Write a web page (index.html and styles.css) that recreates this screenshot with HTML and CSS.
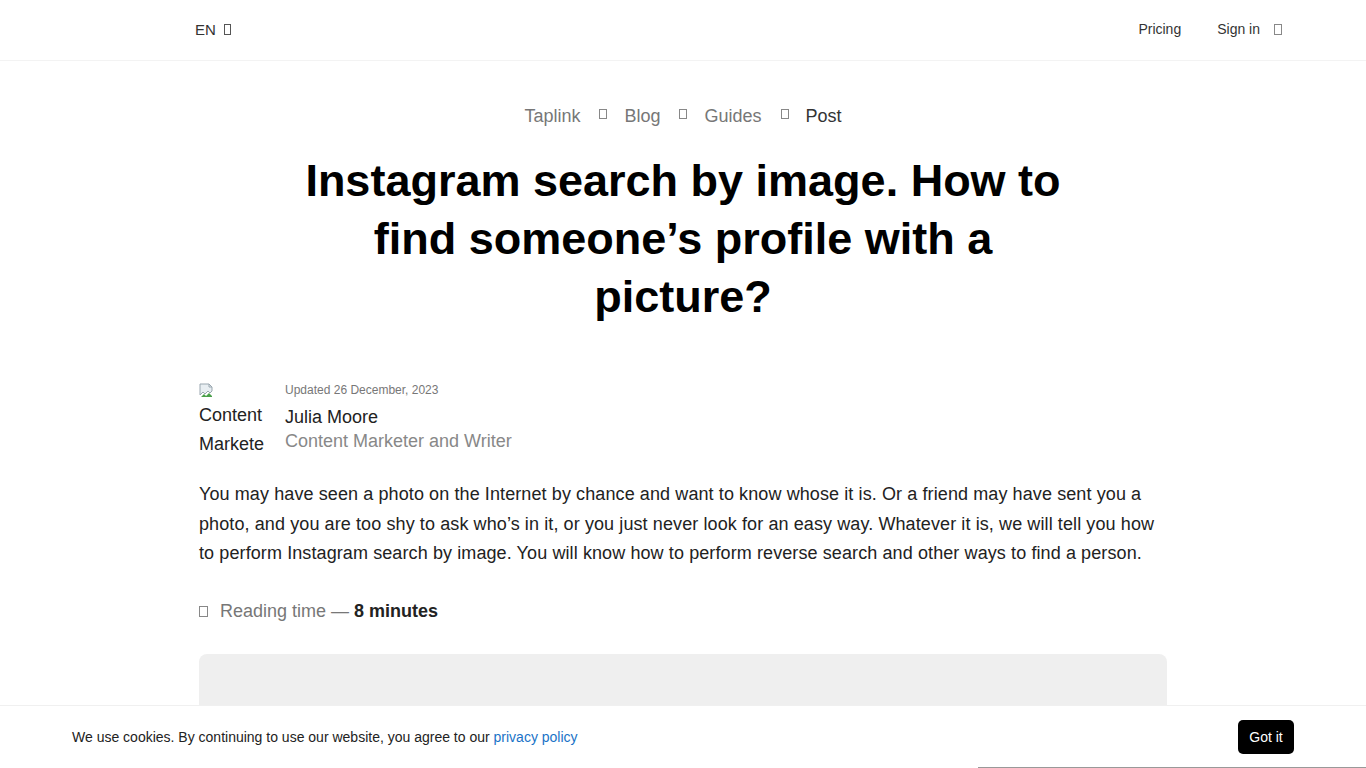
FILE: index.html
```html
<!DOCTYPE html>
<html lang="en">
<head>
<meta charset="utf-8">
<title>Instagram search by image</title>
<link rel="stylesheet" href="styles.css">
</head>
<body>
<header class="header">
  <div class="lang">EN <span class="tofu"></span></div>
  <nav class="nav">
    <a class="nav-link" href="#">Pricing</a>
    <a class="nav-link" href="#">Sign in <span class="tofu tofu-gap"></span></a>
  </nav>
</header>
<main class="main">
  <div class="crumbs">
    <a href="#" class="crumb">Taplink</a><span class="tofu crumb-sep"></span>
    <a href="#" class="crumb">Blog</a><span class="tofu crumb-sep"></span>
    <a href="#" class="crumb">Guides</a><span class="tofu crumb-sep"></span>
    <span class="crumb crumb-current">Post</span>
  </div>
  <h1 class="title">Instagram search by image. How to find someone’s profile with a picture?</h1>
  <div class="author">
    <div class="avatar">
      <svg class="broken" width="16" height="16" viewBox="0 0 16 16">
        <path d="M1 1h9l3 3v4l-2 2-2-2-3 3-2-2-3 3z" fill="#e8eef2" stroke="#9aa7b0" stroke-width="1"/>
        <path d="M2 14l3-3 2 2 3-3 3 3v1H2z" fill="#4aa04a"/>
        <path d="M10 1v3h3" fill="none" stroke="#9aa7b0"/>
      </svg>
      <div class="avatar-alt">Content Marketer and Writer</div>
    </div>
    <div class="author-info">
      <div class="updated">Updated 26 December, 2023</div>
      <div class="author-name">Julia Moore</div>
      <div class="author-role">Content Marketer and Writer</div>
    </div>
  </div>
  <p class="lead">You may have seen a photo on the Internet by chance and want to know whose it is. Or a friend may have sent you a photo, and you are too shy to ask who’s in it, or you just never look for an easy way. Whatever it is, we will tell you how to perform Instagram search by image. You will know how to perform reverse search and other ways to find a person.</p>
  <div class="reading"><span class="tofu reading-icon"></span>Reading time — <b class="reading-strong">8 minutes</b></div>
  <div class="cover"></div>
</main>
<div class="cookie">
  <div class="cookie-text">We use cookies. By continuing to use our website, you agree to our <a href="#" class="cookie-link">privacy policy</a></div>
  <button class="cookie-btn">Got it</button>
  <div class="cookie-line"></div>
</div>
</body>
</html>
```
FILE: styles.css
```css
* { box-sizing: border-box; }
html, body { margin: 0; padding: 0; }
body {
  font-family: "Liberation Sans", Arial, sans-serif;
  color: #222;
  background: #fff;
  height: 768px;
  overflow: hidden;
}
a { text-decoration: none; color: inherit; }

.tofu {
  display: inline-block;
  width: 7px;
  height: 11px;
  border: 1px solid #777;
  vertical-align: -1px;
}

.header {
  height: 61px;
  border-bottom: 1px solid #f3f3f3;
  display: flex;
  align-items: center;
  justify-content: space-between;
  padding: 0 84px 2px 195px;
}
.lang { font-size: 15px; color: #333; display: flex; align-items: center; gap: 8px; }
.lang .tofu { border-color: #555; }
.nav { display: flex; gap: 36px; align-items: center; }
.nav-link { font-size: 14px; color: #333; display: flex; align-items: center; }
.tofu-gap { margin-left: 14px; border-color: #888; width: 8px; }

.main {
  width: 968px;
  margin: 0 auto;
}
.crumbs {
  text-align: center;
  font-size: 18px;
  color: #777;
  padding-top: 44px;
  line-height: 22px;
}
.crumb { color: #777; }
.crumb-current { color: #333; }
.crumb-sep { margin: 0 12px 0 19px; width: 8px; height: 10px; border-color: #888; vertical-align: 3px; }

.title {
  font-size: 45px;
  font-weight: bold;
  color: #000;
  text-align: center;
  line-height: 58px;
  max-width: 790px;
  margin: 25px auto 0;
}

.author {
  display: flex;
  gap: 21px;
  margin-top: 54px;
}
.avatar {
  width: 65px;
  height: 70px;
  overflow: hidden;
  font-size: 18px;
  color: #222;
  padding-top: 3px;
}
.broken { display: block; }
.avatar-alt { line-height: 29px; width: 100px; margin-top: 2px; }
.author-info { display: flex; flex-direction: column; }
.updated { font-size: 12px; color: #777; line-height: 14px; margin-top: 3px; }
.author-name { font-size: 18px; color: #222; line-height: 24px; margin-top: 8px; }
.author-role { font-size: 18px; color: #888; line-height: 22px; margin-top: 1px; }

.lead {
  font-size: 18px;
  line-height: 29.5px;
  letter-spacing: 0.1px;
  color: #222;
  margin: 28px 0 0;
}

.reading {
  font-size: 18px;
  color: #777;
  margin-top: 32px;
  display: flex;
  align-items: center;
}
.reading-icon { width: 9px; height: 11px; margin-right: 12px; border-color: #888; }
.reading-strong { color: #222; margin-left: 5px; font-weight: bold; }

.cover {
  margin-top: 32px;
  height: 120px;
  border-radius: 8px;
  background: #efefef;
}

.cookie {
  position: fixed;
  left: 0;
  right: 0;
  bottom: 0;
  height: 63px;
  background: #fff;
  border-top: 1px solid #f0f0f0;
  display: flex;
  align-items: center;
  justify-content: space-between;
  padding: 0 72px 1px;
}
.cookie-text { font-size: 14px; color: #222; }
.cookie-link { color: #1a73c7; }
.cookie-btn {
  font-family: "Liberation Sans", Arial, sans-serif;
  font-size: 14px;
  color: #fff;
  background: #000;
  border: none;
  border-radius: 5px;
  width: 56px;
  height: 34px;
  padding: 0;
}
.cookie-line {
  position: absolute;
  left: 978px;
  right: 0;
  bottom: 0;
  height: 1px;
  background: #999;
}
```
